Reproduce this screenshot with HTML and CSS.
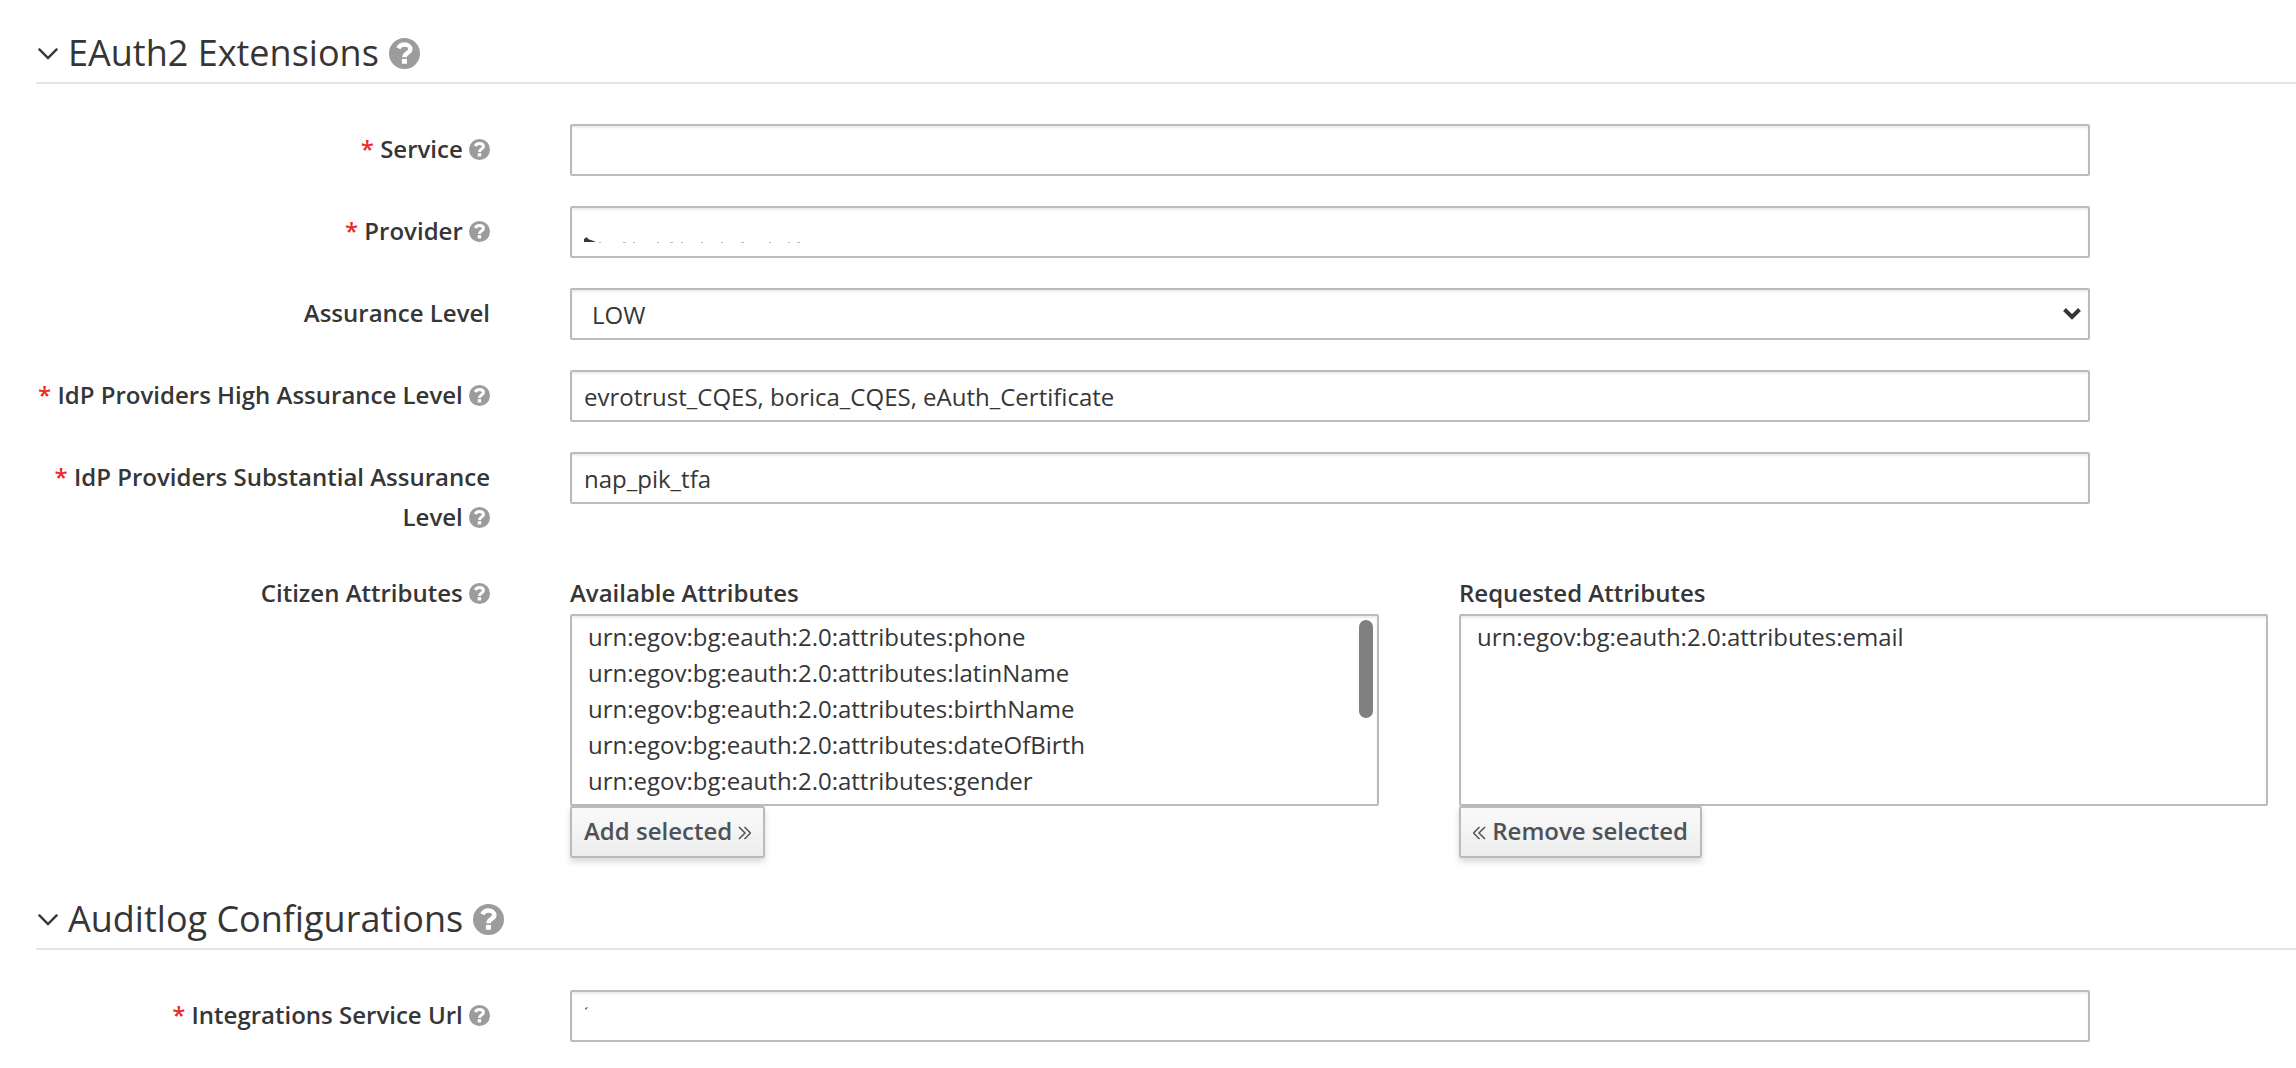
FILE: index.html
```html
<!DOCTYPE html>
<html lang="en">
<head>
<meta charset="utf-8">
<title>Client settings</title>
<link rel="stylesheet" href="styles.css">
</head>
<body>
<svg class="defs" aria-hidden="true">
  <symbol id="help" viewBox="0 0 32 32">
    <circle cx="16" cy="16" r="16" fill="#9c9c9c"/>
    <path d="M9.600 10.600C11 7.900 13.200 6.800 16 6.800C19.600 6.800 22 8.800 22 11.600C22 15.600 16 15.200 16 19.800" fill="none" stroke="#fff" stroke-width="4.600"/>
    <rect x="13.300" y="21.600" width="5.200" height="5" fill="#fff"/>
  </symbol>
  <symbol id="angle" viewBox="0 0 20 12">
    <path d="M1.4 1.4L10 10L18.6 1.4" fill="none" stroke="#363636" stroke-width="2.4" stroke-linecap="round"/>
  </symbol>
</svg>
<form class="page">
  <section class="section">
    <h2 class="title"><svg class="angle"><use href="#angle"/></svg><span>EAuth2 Extensions</span><svg class="help help-lg"><use href="#help"/></svg></h2>
    <div class="row">
      <label class="label" for="service"><span class="req">*</span> Service <svg class="help"><use href="#help"/></svg></label>
      <div class="field"><input class="control" id="service" type="text"></div>
    </div>
    <div class="row">
      <label class="label" for="provider"><span class="req">*</span> Provider <svg class="help"><use href="#help"/></svg></label>
      <div class="field">
        <input class="control" id="provider" type="text">
        <svg class="trace" viewBox="0 0 240 52" aria-hidden="true">
          <path d="M14 35V33L17 31L18 33L25 35.500V36H14Z" fill="#363636"/>
          <path d="M29 36.500h2M53 36.500h3M63 36.500h2M87 36.500h2M100 36.500h3M111 36.500h2M131 36.500h2M151 36.500h2M171 36.500h3M199 36.500h2M218 36.500h2M227 36.500h3" stroke="#bbb" fill="none"/>
        </svg>
      </div>
    </div>
    <div class="row">
      <label class="label" for="level">Assurance Level</label>
      <div class="field">
        <select class="control dropdown" id="level"><option>LOW</option></select>
        <svg class="caret" viewBox="0 0 18 12" aria-hidden="true"><path d="M1.500 1.500L9 9L16.500 1.500" fill="none" stroke="#363636" stroke-width="4"/></svg>
      </div>
    </div>
    <div class="row">
      <label class="label" for="high"><span class="req">*</span> IdP Providers High Assurance Level <svg class="help"><use href="#help"/></svg></label>
      <div class="field"><input class="control" id="high" type="text" value="evrotrust_CQES, borica_CQES, eAuth_Certificate"></div>
    </div>
    <div class="row">
      <label class="label" for="substantial"><span class="req">*</span> IdP Providers Substantial Assurance Level <svg class="help"><use href="#help"/></svg></label>
      <div class="field"><input class="control" id="substantial" type="text" value="nap_pik_tfa"></div>
    </div>
    <div class="row">
      <div class="label">Citizen Attributes <svg class="help"><use href="#help"/></svg></div>
      <div class="lists">
        <div class="list">
          <label class="label" for="available">Available Attributes</label>
          <div class="scrollbox">
            <select class="control listbox" id="available" multiple size="5">
              <option>urn:egov:bg:eauth:2.0:attributes:phone</option>
              <option>urn:egov:bg:eauth:2.0:attributes:latinName</option>
              <option>urn:egov:bg:eauth:2.0:attributes:birthName</option>
              <option>urn:egov:bg:eauth:2.0:attributes:dateOfBirth</option>
              <option>urn:egov:bg:eauth:2.0:attributes:gender</option>
            </select>
            <span class="thumb"></span>
          </div>
          <button class="btn" type="button">Add selected <svg class="chevrons" viewBox="0 0 13 14"><path d="M1 1L7 7L1 13M6.500 1L12.500 7L6.500 13"/></svg></button>
        </div>
        <div class="list">
          <label class="label" for="requested">Requested Attributes</label>
          <div class="scrollbox">
            <select class="control listbox" id="requested" multiple size="5">
              <option>urn:egov:bg:eauth:2.0:attributes:email</option>
            </select>
          </div>
          <button class="btn" type="button"><svg class="chevrons" viewBox="0 0 13 14"><path d="M6.500 1L.5 7L6.500 13M12 1L6 7L12 13"/></svg> Remove selected</button>
        </div>
      </div>
    </div>
  </section>
  <section class="section">
    <h2 class="title"><svg class="angle"><use href="#angle"/></svg><span>Auditlog Configurations</span><svg class="help help-lg"><use href="#help"/></svg></h2>
    <div class="row">
      <label class="label" for="url"><span class="req">*</span> Integrations Service Url <svg class="help"><use href="#help"/></svg></label>
      <div class="field">
        <input class="control" id="url" type="text">
        <svg class="trace" viewBox="0 0 240 52" aria-hidden="true"><path d="M15 18L18 17L16 20Z" fill="#555"/></svg>
      </div>
    </div>
  </section>
</form>
</body>
</html>
```
FILE: styles.css
```css
* { box-sizing: border-box; }

body {
  margin: 0;
  background: #fff;
  color: #363636;
  font: 24px/40px "Open Sans", sans-serif;
}

.defs { display: none; }

.page {
  display: flex;
  flex-direction: column;
  gap: 41px;
  padding: 33px 0 24px 36px;
}

.section {
  display: flex;
  flex-direction: column;
  gap: 30px;
}

.title {
  display: flex;
  align-items: center;
  margin: 0 0 10px;
  padding-bottom: 9px;
  border-bottom: 2px solid #e5e5e5;
  font-size: 36px;
  font-weight: 400;
  line-height: 40px;
}

.angle {
  width: 20px;
  height: 12px;
  margin: 2px 10px 0 2px;
}

.help {
  width: 21px;
  height: 21px;
  vertical-align: -2px;
}

.help-lg {
  width: 31px;
  height: 31px;
  margin-left: 10px;
}

.row {
  display: grid;
  grid-template-columns: 454px minmax(0, 1fr);
  gap: 80px;
  align-items: start;
  padding-right: 28px;
}

.label {
  padding: 5px 0 1px;
  font-weight: 600;
  text-align: right;
}

.req { color: #f0281e; }

.field {
  display: grid;
  align-items: center;
  padding-right: 178px;
}

.field > *,
.scrollbox > * { grid-area: 1 / 1; }

.control {
  width: 100%;
  height: 52px;
  margin: 0;
  padding: 0 12px;
  border: 2px solid #bbb;
  border-radius: 2px;
  background: #fff;
  box-shadow: inset 0 2px 2px rgba(3, 3, 3, .075);
  color: inherit;
  font: inherit;
  line-height: 36px;
}

.dropdown {
  appearance: none;
  padding: 2px 20px 0;
}

.caret {
  justify-self: end;
  width: 18px;
  height: 12px;
  margin-right: 9px;
  pointer-events: none;
}

.trace {
  width: 240px;
  height: 52px;
  pointer-events: none;
}

.lists {
  display: grid;
  grid-template-columns: 1fr 1fr;
  gap: 80px;
}

.list {
  display: flex;
  flex-direction: column;
  align-items: flex-start;
}

.scrollbox {
  display: grid;
  width: 100%;
}

.listbox {
  height: 192px;
  padding: 4px 0;
}

.listbox option {
  min-height: 36px;
  padding: 0 16px;
  line-height: 36px;
}

.thumb {
  z-index: 1;
  justify-self: end;
  width: 14px;
  height: 98px;
  margin: 6px 6px 0 0;
  border-radius: 7px;
  background: #808080;
}

.btn {
  height: 52px;
  padding: 0 12px 2px;
  border: 2px solid #bbb;
  border-radius: 2px;
  background: linear-gradient(#fafafa, #ededed);
  box-shadow: 0 4px 6px rgba(3, 3, 3, .15);
  color: #4d5258;
  font: inherit;
  font-weight: 600;
}

.chevrons {
  width: 13px;
  height: 14px;
  fill: none;
  stroke: #4d5258;
  stroke-width: 1.5;
}
```
